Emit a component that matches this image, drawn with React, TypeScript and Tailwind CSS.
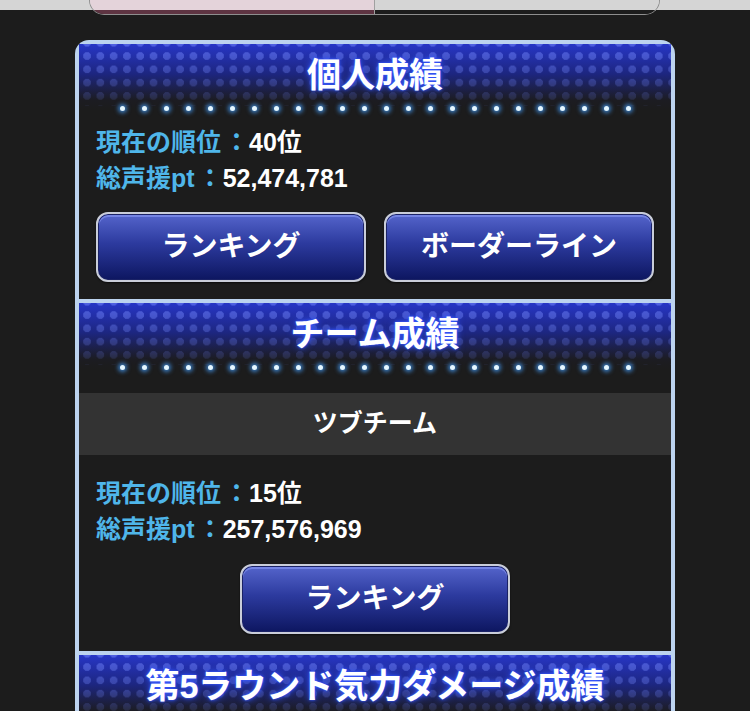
import React from 'react';

const DOTS = Array.from({ length: 24 });

function SectionHeader({ title }: { title: string }) {
  return (
    <div className="relative h-[80px] overflow-hidden">
      <div className="absolute inset-x-0 top-0 h-[66px] bg-[linear-gradient(#2736c6,#1d2680_45%,#1c1c22_85%,#1c1c1c)]" />
      <div className="absolute inset-x-0 top-0 h-[62px] bg-[radial-gradient(circle,rgba(120,140,255,0.5)_3.6px,transparent_4.2px)] bg-[length:13.3px_13.3px] bg-[position:1.4px_5.4px] [mask-image:linear-gradient(black,rgba(0,0,0,0.2))]" />
      <div className="relative flex flex-col items-center pt-[10px]">
        <h2 className="text-[34px] leading-[42px] font-bold text-white [text-shadow:0_0_7px_#3658ff,0_0_3px_#2b4dff,0_0_1px_#6f8cff]">
          {title}
        </h2>
        <div className="mt-[10px] flex w-[511px] justify-between">
          {DOTS.map((_, i) => (
            <span
              key={i}
              className="h-[5px] w-[5px] rounded-full bg-[#e4f6ff] shadow-[0_0_4px_2px_rgba(70,160,255,0.75)]"
            />
          ))}
        </div>
      </div>
    </div>
  );
}

function StatLine({ label, value }: { label: string; value: string }) {
  return (
    <p className="text-[25px] leading-[36px] font-bold">
      <span className="text-[#4fb6ea]">
        {label}
        <span className="ml-[3px]">：</span>
      </span>
      <span className="text-white">{value}</span>
    </p>
  );
}

function GlossButton({ label, className = '' }: { label: string; className?: string }) {
  return (
    <button
      className={`h-[70px] rounded-[12px] border-2 border-[#c9cdd9] bg-[linear-gradient(#5565cc,#2c3a9e_45%,#0d1660)] text-[28px] font-bold text-white shadow-[inset_0_0_0_1px_#1a2266,inset_0_2px_0_1px_rgba(150,165,255,0.5),0_1px_2px_rgba(0,0,0,0.6)] ${className}`}
    >
      {label}
    </button>
  );
}

export default function App() {
  return (
    <div className="min-h-[711px] w-[750px] overflow-hidden bg-[#1c1c1c] font-['Liberation_Sans','Noto_Sans_CJK_JP',sans-serif]">
      {/* top segmented control, mostly scrolled out of view */}
      <div className="relative h-[15px]">
        <div className="h-[10px] bg-[#d5d5d5]" />
        <div className="absolute left-[89px] top-0 flex h-[15px] w-[571px] overflow-hidden rounded-b-[16px] border-x border-b border-[#8e8e8e]">
          <div className="flex-1 bg-[linear-gradient(#e4d3da_10px,#5e3442_10px)]" />
          <div className="w-px bg-[#a0a0a0]" />
          <div className="flex-1 bg-[linear-gradient(#d5d5d5_10px,#1c1c1c_10px)]" />
        </div>
      </div>

      <div className="mx-auto mt-[25px] w-[600px] rounded-t-[14px] border-x-4 border-t-4 border-[#bcd3ef]">
        <section className="pb-[17px]">
          <SectionHeader title="個人成績" />
          <div className="px-[17px]">
            <StatLine label="現在の順位" value="40位" />
            <StatLine label="総声援pt" value="52,474,781" />
            <div className="mt-4 flex gap-[18px]">
              <GlossButton label="ランキング" className="flex-1" />
              <GlossButton label="ボーダーライン" className="flex-1" />
            </div>
          </div>
        </section>

        <section className="border-t-4 border-[#bcd3ef] pb-[17px]">
          <SectionHeader title="チーム成績" />
          <div className="mt-[10px] flex h-[62px] items-center justify-center bg-[#333333] text-[25px] font-bold text-white">
            ツブチーム
          </div>
          <div className="mt-[20px] px-[17px]">
            <StatLine label="現在の順位" value="15位" />
            <StatLine label="総声援pt" value="257,576,969" />
            <div className="mt-[17px] flex justify-center">
              <GlossButton label="ランキング" className="w-[270px]" />
            </div>
          </div>
        </section>

        <section className="border-t-4 border-[#bcd3ef]">
          <SectionHeader title="第5ラウンド気力ダメージ成績" />
        </section>
      </div>
    </div>
  );
}
